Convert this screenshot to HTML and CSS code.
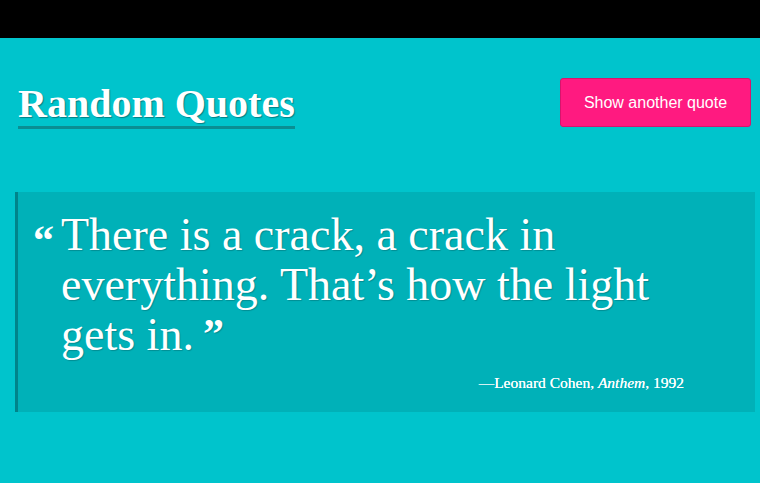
FILE: index.html
```html
<!DOCTYPE html>
<html>
<head>
<meta charset="utf-8">
<link rel="stylesheet" href="styles.css">
</head>
<body>
<div class="topbar"></div>
<header class="header">
  <h1 class="title">Random Quotes</h1>
  <button class="btn">Show another quote</button>
</header>
<blockquote class="quote">
  <div class="quote-row">
    <span class="mark-open">“</span>
    <p class="quote-text">There is a crack, a crack in everything. That’s how the light gets in.<span class="mark-close">”</span></p>
  </div>
  <p class="cite">—Leonard Cohen, <em>Anthem</em>, 1992</p>
</blockquote>
</body>
</html>
```

FILE: styles.css
```css
html, body {
  margin: 0;
  padding: 0;
}
body {
  background: #00c4cc;
  width: 760px;
  height: 483px;
  overflow: hidden;
  font-family: "Liberation Serif", "DejaVu Serif", serif;
  color: #fff;
}
.topbar {
  height: 38px;
  background: #000;
}
.header {
  display: flex;
  justify-content: space-between;
  align-items: flex-start;
  padding: 40px 9px 0 18px;
}
.title {
  margin: 0;
  font-size: 40px;
  font-weight: bold;
  line-height: 44px;
  padding-top: 4px;
  border-bottom: 3px solid #0a8e93;
  text-shadow: 1px 1px 1px rgba(0,0,0,0.35);
}
.btn {
  width: 191px;
  height: 49px;
  background: #ff1a80;
  border: 1px solid #d8146c;
  border-radius: 3px;
  color: #fff;
  font-family: "Liberation Sans", Arial, sans-serif;
  font-size: 16px;
  padding: 0;
}
.quote {
  margin: 63px 5px 0 15px;
  background: #00b1b8;
  border-left: 3px solid #00848a;
  height: 220px;
  box-sizing: border-box;
  padding: 18px 71px 0 15px;
}
.quote-row {
  display: flex;
  gap: 7px;
}
.mark-open {
  font-size: 42px;
  line-height: 40px;
  font-weight: bold;
  margin-top: 10px;
  height: 30px;
}
.quote-text {
  margin: 0;
  font-size: 46px;
  line-height: 50px;
  text-shadow: 1px 1px 1px rgba(0,0,0,0.2);
  width: 640px;
}
.mark-close {
  display: inline-block;
  font-size: 42px;
  font-weight: bold;
  line-height: 20px;
  margin-left: 9px;
  vertical-align: 2px;
}
.cite {
  margin: 14px 0 0;
  text-align: right;
  font-size: 15.5px;
  text-shadow: 0 0 0.4px #fff;
}
```
